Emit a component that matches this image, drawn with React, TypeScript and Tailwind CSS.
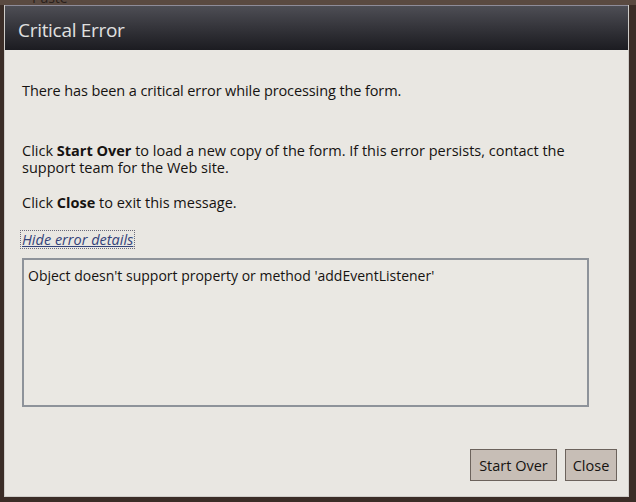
import React from "react";

const font = { fontFamily: '"Open Sans", "Noto Sans", sans-serif' };

export default function App() {
  return (
    <div
      className="w-[636px] h-[502px] bg-[#3b2d27] flex flex-col overflow-hidden"
      style={font}
    >
      <div className="h-[5px] bg-[#5a4a41] overflow-hidden pl-[32px]">
        <div className="h-[5px] overflow-hidden">
          <div className="text-[14px] leading-[14px] text-[#2a201b] -mt-[9px]">Paste</div>
        </div>
      </div>
      <div className="flex-1 flex pl-[4px] pr-[7px] pb-[5px]">
        <div className="flex-1 flex flex-col border border-[#cfcdc9] border-t-0">
          <div className="h-[45px] shrink-0 bg-gradient-to-b from-[#4e4e55] to-[#1c1c21] border-t border-[#8e8c99] flex items-center pl-[13px] pt-[3px]">
            <span className="text-[19px] leading-[24px] text-[#e0e0e0] tracking-[-0.3px]">Critical Error</span>
          </div>
          <div className="flex-1 bg-[#e9e7e2] flex flex-col pl-[17px] pr-[10px] pt-[32px] text-[14.5px] leading-[17px] text-[#161311]">
            <p className="tracking-[-0.1px]">There has been a critical error while processing the form.</p>
            <p className="mt-[43px]">
              Click <b className="font-bold">Start Over</b> to load a new copy of the form. If this error persists, contact the
              <br />
              support team for the Web site.
            </p>
            <p className="mt-[18px]">
              Click <b className="font-bold">Close</b> to exit this message.
            </p>
            <div className="mt-[20px] flex">
              <span className="italic text-[#34437a] underline leading-[17px] outline outline-1 outline-dotted outline-[#6a6a7a] px-[1px] -ml-[1px]">
                Hide error details
              </span>
            </div>
            <div className="mt-[10px] w-[567px] h-[149px] border-2 border-[#8e939a] bg-[#eae8e3] pl-[4px] pt-[7px] text-[14px]">
              Object doesn't support property or method 'addEventListener'
            </div>
            <div className="mt-[42px] flex justify-end gap-[8px] pr-[1px]">
              <button className="w-[87px] h-[32px] bg-[#c7beb6] border border-[#6c635c] text-[14.5px] text-[#161311]">
                Start Over
              </button>
              <button className="w-[52px] h-[32px] bg-[#c7beb6] border border-[#6c635c] text-[14.5px] text-[#161311]">
                Close
              </button>
            </div>
          </div>
        </div>
      </div>
    </div>
  );
}
